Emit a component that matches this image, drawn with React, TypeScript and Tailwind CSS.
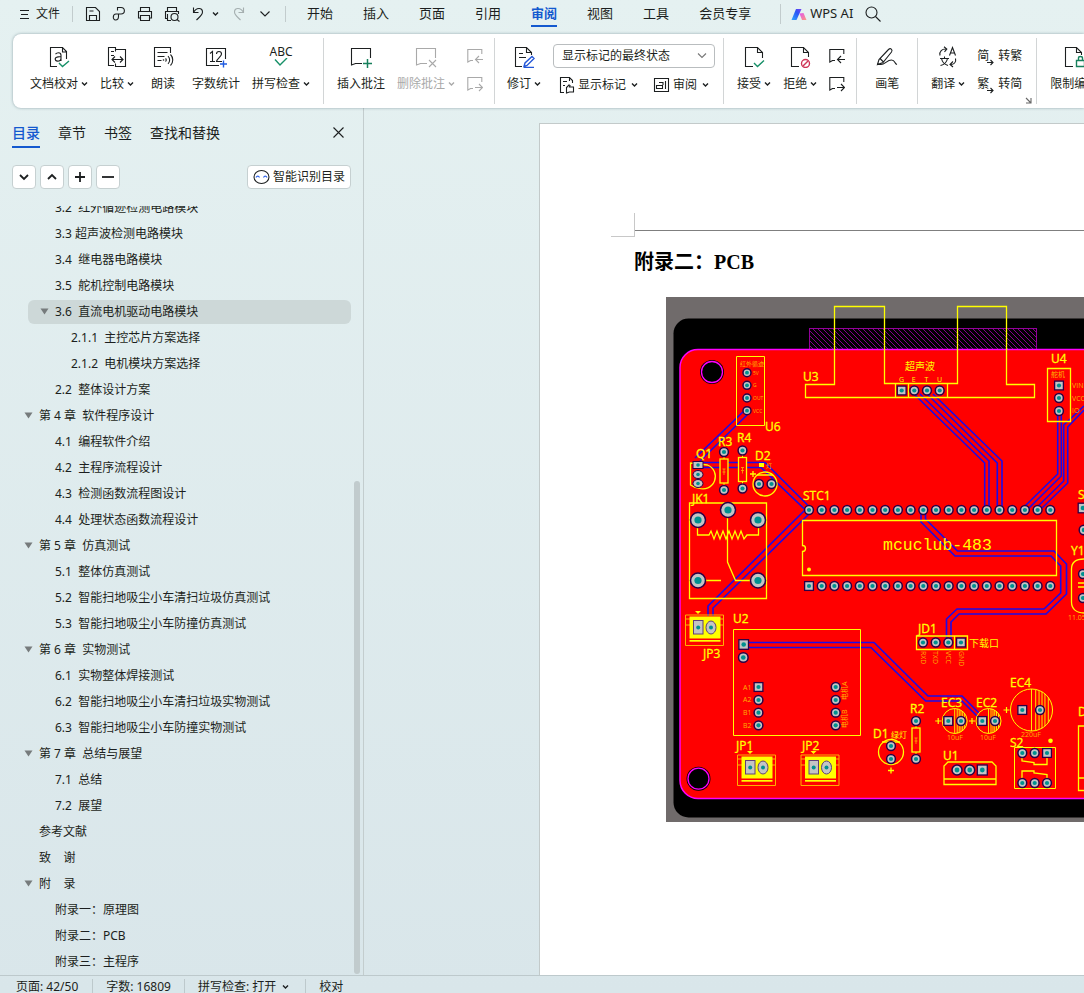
import { useState, type ReactNode } from "react";
import clsx from "clsx";

type OutlineItem = {
  level: number;
  text: string;
  expandable?: boolean;
};

const outline: OutlineItem[] = [
  { level: 1, text: "3.2  红外循迹检测电路模块" },
  { level: 1, text: "3.3 超声波检测电路模块" },
  { level: 1, text: "3.4  继电器电路模块" },
  { level: 1, text: "3.5  舵机控制电路模块" },
  { level: 1, text: "3.6  直流电机驱动电路模块", expandable: true },
  { level: 2, text: "2.1.1  主控芯片方案选择" },
  { level: 2, text: "2.1.2  电机模块方案选择" },
  { level: 1, text: "2.2  整体设计方案" },
  { level: 0, text: "第 4 章  软件程序设计", expandable: true },
  { level: 1, text: "4.1  编程软件介绍" },
  { level: 1, text: "4.2  主程序流程设计" },
  { level: 1, text: "4.3  检测函数流程图设计" },
  { level: 1, text: "4.4  处理状态函数流程设计" },
  { level: 0, text: "第 5 章  仿真测试", expandable: true },
  { level: 1, text: "5.1  整体仿真测试" },
  { level: 1, text: "5.2  智能扫地吸尘小车清扫垃圾仿真测试" },
  { level: 1, text: "5.3  智能扫地吸尘小车防撞仿真测试" },
  { level: 0, text: "第 6 章  实物测试", expandable: true },
  { level: 1, text: "6.1  实物整体焊接测试" },
  { level: 1, text: "6.2  智能扫地吸尘小车清扫垃圾实物测试" },
  { level: 1, text: "6.3  智能扫地吸尘小车防撞实物测试" },
  { level: 0, text: "第 7 章  总结与展望", expandable: true },
  { level: 1, text: "7.1  总结" },
  { level: 1, text: "7.2  展望" },
  { level: 0, text: "参考文献" },
  { level: 0, text: "致    谢" },
  { level: 0, text: "附    录", expandable: true },
  { level: 1, text: "附录一：原理图" },
  { level: 1, text: "附录二：PCB" },
  { level: 1, text: "附录三：主程序" },
];

const menuTabs = ["开始", "插入", "页面", "引用", "审阅", "视图", "工具", "会员专享"];
const sideTabs = ["目录", "章节", "书签", "查找和替换"];

/* ---------- icons ---------- */

const Icon = ({ w = 22, h = 22, children }: { w?: number; h?: number; children: ReactNode }) => (
  <svg
    width={w}
    height={h}
    viewBox={`0 0 ${w} ${h}`}
    fill="none"
    stroke="currentColor"
    strokeWidth="1.1"
    className="block shrink-0"
    aria-hidden="true"
  >
    {children}
  </svg>
);

const Chevron = () => (
  <Icon w={7} h={6}>
    <path d="M1 1.5 3.5 4 6 1.5" strokeWidth="1.4" />
  </Icon>
);

const ProofIcon = () => (
  <Icon>
    <path d="M9 20.500H2.500v-19h12l4 4V13M14.500 1.500v4.500h4" />
    <path d="M7.500 8.200c.8-1 1.800-1.400 3-1.400 1.700 0 2.500.9 2.500 2.500v5.600M13 10.500l-3 .4c-1.800.3-2.800.9-2.800 2.200s1 2 2.300 2c1.900 0 3.500-1.300 3.500-3.200" />
    <path d="m11 17 3.500 3.500L21 15" stroke="#179068" strokeWidth="1.400" />
  </Icon>
);

const CompareIcon = () => (
  <Icon>
    <path d="M8 19.500H2.500v-18h7v3M9.500 5.500v-2h10v17h-10v-3M5 5.500h3M5 9.500h3" />
    <path d="M6.500 13.500h10M9 10.500l-3 3 3 3M14 10.500l3 3-3 3" />
  </Icon>
);

const ReadIcon = () => (
  <Icon>
    <path d="M9 20.500H2.500v-19h16V7M5.500 6.500h10M5.500 10.500h7M5.500 14.500h4" />
    <path d="M13.500 12.500c1 .8 1 2.200 0 3M16 10.200c2.200 2 2.200 5.600 0 7.600M18.500 8.500c3 3 3 8 0 11" />
    <circle cx="11.500" cy="14" r=".8" fill="currentColor" stroke="none" />
  </Icon>
);

const CountIcon = () => (
  <Icon>
    <path d="M14 19.500H1.500v-17h19V13" />
    <path d="M5 7.500 7.500 5.500v10M5 15.500h5M11.500 8c0-1.500 1-2.500 2.500-2.500s2.500 1 2.500 2.500c0 2.500-4.500 4.500-5 7.500h5.500" />
    <path d="M18.500 14.500v7M15 18h7" stroke="#1f5be0" strokeWidth="1.400" />
  </Icon>
);

const SpellIcon = () => (
  <span className="flex h-[22px] flex-col items-center">
    <span className="text-xs leading-3">ABC</span>
    <Icon w={14} h={9}>
      <path d="m1 1.500 5 5.500L13 0" stroke="#179068" strokeWidth="1.400" />
    </Icon>
  </span>
);

const CommentIcon = ({ remove }: { remove?: boolean }) => (
  <Icon>
    <path d="M12 17.500H5.500l-4 1.500V2.500h19V12" />
    {remove ? (
      <path d="m14 14 7 7M21 14l-7 7" />
    ) : (
      <path d="M17.500 13v9M13 17.500h9" stroke="#17805c" strokeWidth="1.500" />
    )}
  </Icon>
);

const StepIcon = ({ next }: { next?: boolean }) => (
  <Icon w={16} h={16}>
    <path d="M6 12.500H3.500L.8 14V1.500h14V6" />
    {next ? <path d="M8 11.500h7.500M12 8l3.500 3.500L12 15" /> : <path d="M16 11.500H8.500M12 8l-3.500 3.500L12 15" />}
  </Icon>
);

const ReviseIcon = () => (
  <Icon>
    <path d="M9 20.500H2.500v-19h11l5 5V9M13.500 1.500v5h5M6 7.500h4M6 11.500h7" />
    <path d="m11 20.500 1-3.500 7-6.500 2 2-7 7zM11 21.500h10" stroke="#2457d8" strokeWidth="1.400" />
  </Icon>
);

const MarkIcon = () => (
  <Icon w={16} h={18}>
    <path d="M5 16.500H1.500v-15h9l3 3V7M10.500 1.500v3.500M4 5.500h4M4 9.500h2M7.500 16.500v-5l2.500-2.500 1 .5-.5 1.500h4v5h-4l-3 1z" />
  </Icon>
);

const PaneIcon = () => (
  <Icon w={17} h={16}>
    <path d="M1.500 1.500h14v13h-14zM12.500 4v8M3.500 8.500h6v3h-6zM6 5.500h4V8" />
  </Icon>
);

const AcceptIcon = () => (
  <Icon>
    <path d="M10 20.500H2.500v-19h12l5 5V12M14.500 1.500v5h5" />
    <path d="m11 17 3.500 3.500 6.500-6" stroke="#179068" strokeWidth="1.400" />
  </Icon>
);

const RejectIcon = () => (
  <Icon>
    <path d="M10 20.500H2.500v-19h12l5 5V11M14.500 1.500v5h5" />
    <circle cx="16.500" cy="17.500" r="4" stroke="#cf3557" strokeWidth="1.400" />
    <path d="m14 20 5-5" stroke="#cf3557" strokeWidth="1.400" />
  </Icon>
);

const PenIcon = () => (
  <Icon>
    <path d="m1.500 18.500 1.500-5 9.500-10c2-2 4.500 0 3 2.500L7 16.500zM4 12.500l3.500 3.500M1.500 18.500H5c4 0 6-4.500 10.500-4.500 4 0 2.500 3.500 5.500 4.500" />
  </Icon>
);

const TranslateIcon = () => (
  <Icon>
    <path d="M3 9.500C2 5.500 5 2.500 9.500 3M7 .8 9.800 3 7.500 5.800M18.500 12.500c1 3.500-1.500 6.500-5.500 6M16 15.500 13 18.500l3 2.500" />
    <path d="m12.500 9.500 3-8 3 8M13.500 7h4M3 12.500h9M7.500 10.500v2M4.500 12.500c.8 4 3 6 6.500 7M10.500 12.500c-.8 4-3 6-7 7" />
  </Icon>
);

const LimitIcon = () => (
  <Icon>
    <path d="M10 20.500H2.500v-19h11l5 5V9M13.500 1.500v5h5" />
    <path d="M13.500 14.500h8v6h-8zM15.500 14.500V12c0-2 4-2 4 0v2.500" stroke="#17805c" strokeWidth="1.400" />
  </Icon>
);

const SaveIcon = () => (
  <Icon w={16} h={16}>
    <path d="M1.500 1.500h9l4 4v9h-13zM4.500 14V9.500h7V14M4.500 5h4" />
  </Icon>
);

const PdfIcon = () => (
  <Icon w={14} h={16}>
    <path d="M5.500 4.500v-3H9c4.500 0 4.500 6.500 0 6.500H4c-3.500 0-3.500 6-.5 6 2.500 0 3-1.500 3-3.500V8" />
  </Icon>
);

const PrintIcon = () => (
  <Icon w={16} h={16}>
    <path d="M3.500 5V1.500h9V5M3.500 12H1.500V5.500h13V12h-2M3.500 9.500h9v5h-9z" />
  </Icon>
);

const PreviewIcon = () => (
  <Icon w={16} h={16}>
    <path d="M3.500 5V1.500h9V5M3.500 12.500h-2v-7h13V8M3.500 8v6.500H7" />
    <circle cx="10.500" cy="11" r="3.500" />
    <path d="m13 13.500 2.500 2" />
  </Icon>
);

const UndoIcon = () => (
  <Icon w={12} h={16}>
    <path d="M1.500 1.500v5h5M1.500 6.500C4 1.500 10.500 1 10.500 6c0 3-3 5-6 8" />
  </Icon>
);

const RedoIcon = () => (
  <Icon w={12} h={16}>
    <path d="M10.500 1.500v5h-5M10.500 6.500C8 1.500 1.500 1 1.500 6c0 3 3 5 6 8" />
  </Icon>
);

const WpsAiLogo = () => (
  <svg width="16" height="13" viewBox="0 0 16 13" aria-hidden="true">
    <defs>
      <linearGradient id="aiA" x1="0" y1="1" x2="1" y2="0">
        <stop offset="0" stopColor="#2fa8ff" />
        <stop offset=".6" stopColor="#2b56f5" />
        <stop offset="1" stopColor="#7a3df0" />
      </linearGradient>
      <linearGradient id="aiB" x1="0" y1="0" x2="1" y2="1">
        <stop offset="0" stopColor="#e054f0" />
        <stop offset="1" stopColor="#ff9a7a" />
      </linearGradient>
    </defs>
    <path d="M5 1h5.500L5.500 12H.5z" fill="url(#aiA)" />
    <path d="M8.500 5.500 12.500 5l3 7H11z" fill="url(#aiB)" />
  </svg>
);

/* ---------- ribbon ---------- */

const Group = ({ children, className }: { children: ReactNode; className: string }) => (
  <div className={clsx("my-1 flex shrink-0 items-start gap-3 border-r border-[#d2d5d6] pt-2", className)}>
    {children}
  </div>
);

const BigButton = ({
  icon,
  label,
  arrow,
  disabled,
}: {
  icon: ReactNode;
  label: string;
  arrow?: boolean;
  disabled?: boolean;
}) => (
  <button
    disabled={disabled}
    className="flex min-w-[34px] shrink-0 flex-col items-center gap-2 leading-4 disabled:text-[#a9a9a9]"
  >
    {icon}
    <span className="flex items-center gap-[3px] whitespace-nowrap">
      {label}
      {arrow && <Chevron />}
    </span>
  </button>
);

const StepButtons = ({ disabled }: { disabled?: boolean }) => (
  <div className="flex w-[15px] flex-col gap-3 pt-0.5">
    <button aria-label="上一条" disabled={disabled} className="disabled:text-[#a9a9a9]">
      <StepIcon />
    </button>
    <button aria-label="下一条" disabled={disabled} className="disabled:text-[#a9a9a9]">
      <StepIcon next />
    </button>
  </div>
);

const ConvertButton = ({ mark, label }: { mark: string; label: string }) => (
  <button className="flex items-center gap-1 leading-4 whitespace-nowrap">
    <span className="relative w-[17px] text-left">
      {mark}
      <span className="absolute right-0 -bottom-0.5">
        <Icon w={7} h={7}>
          <path d="M0 3.500h6M3.500 1 6 3.500 3.500 6" />
        </Icon>
      </span>
    </span>
    {label}
  </button>
);

const Ribbon = () => (
  <div className="relative z-10 ml-[13px] flex h-[74px] shrink-0 overflow-hidden rounded-l-lg bg-white text-xs shadow-[0_0_3px_rgba(60,90,100,0.5)]">
    <Group className="pr-[13px] pl-[17px]">
      <BigButton icon={<ProofIcon />} label="文档校对" arrow />
      <BigButton icon={<CompareIcon />} label="比较" arrow />
      <BigButton icon={<ReadIcon />} label="朗读" />
      <BigButton icon={<CountIcon />} label="字数统计" />
      <BigButton icon={<SpellIcon />} label="拼写检查" arrow />
    </Group>
    <Group className="pr-3 pl-[13px]">
      <BigButton icon={<CommentIcon />} label="插入批注" />
      <BigButton icon={<CommentIcon remove />} label="删除批注" arrow disabled />
      <StepButtons disabled />
    </Group>
    <Group className="pr-2 pl-3">
      <BigButton icon={<ReviseIcon />} label="修订" arrow />
      <div className="-mt-0.5 flex flex-col gap-2">
        <div className="relative">
          <select
            aria-label="标记状态"
            className="block h-6 w-[162px] appearance-none rounded border border-[#b9bdbf] bg-white pl-2 leading-4"
          >
            <option>显示标记的最终状态</option>
          </select>
          <span className="pointer-events-none absolute top-2 right-2">
            <Icon w={10} h={8}>
              <path d="m1 1.500 4 4 4-4" stroke="#777" />
            </Icon>
          </span>
        </div>
        <div className="flex justify-between px-1.5">
          <button className="flex items-center gap-[3px] leading-4">
            <MarkIcon />
            <span className="pr-0.5">显示标记</span>
            <Chevron />
          </button>
          <button className="flex items-center gap-[3px] leading-4">
            <PaneIcon />
            <span className="pr-0.5">审阅</span>
            <Chevron />
          </button>
        </div>
      </div>
    </Group>
    <Group className="pr-3 pl-[13px]">
      <BigButton icon={<AcceptIcon />} label="接受" arrow />
      <BigButton icon={<RejectIcon />} label="拒绝" arrow />
      <StepButtons />
    </Group>
    <Group className="px-[13px]">
      <BigButton icon={<PenIcon />} label="画笔" />
    </Group>
    <Group className="relative pr-3.5 pl-[13px]">
      <BigButton icon={<TranslateIcon />} label="翻译" arrow />
      <div className="flex flex-col gap-3 pt-0.5">
        <ConvertButton mark="简" label="转繁" />
        <ConvertButton mark="繁" label="转简" />
      </div>
      <span className="absolute right-1 bottom-0">
        <Icon w={7} h={7}>
          <path d="m1 1 5 5M6 1v5H1" stroke="#666" />
        </Icon>
      </span>
    </Group>
    <Group className="px-[13px]">
      <BigButton icon={<LimitIcon />} label="限制编辑" />
    </Group>
  </div>
);

const TopBar = () => {
  const [tab, setTab] = useState("审阅");
  return (
    <header className="flex h-[34px] shrink-0 items-center overflow-hidden pb-1.5 pl-5 whitespace-nowrap">
      <button className="flex items-center gap-[7px] text-xs">
        <Icon w={9} h={11}>
          <path d="M0 1.500h9M1 5.500h7M0 9.500h9" />
        </Icon>
        文件
      </button>
      <span className="ml-3 h-4 w-px shrink-0 bg-[#c2cccd]" />
      <div className="ml-3 flex shrink-0 items-center gap-[11px]">
        <button aria-label="保存"><SaveIcon /></button>
        <button aria-label="输出为PDF"><PdfIcon /></button>
        <button aria-label="打印"><PrintIcon /></button>
        <button aria-label="打印预览"><PreviewIcon /></button>
      </div>
      <button aria-label="撤销" className="ml-3"><UndoIcon /></button>
      <button aria-label="撤销历史" className="ml-2"><Chevron /></button>
      <button aria-label="恢复" className="ml-3.5 text-[#a5afb0]"><RedoIcon /></button>
      <button aria-label="更多" className="ml-3.5">
        <Icon w={12} h={8}>
          <path d="m1.500 1.500 4.500 4.500 4.500-4.500" />
        </Icon>
      </button>
      <span className="ml-3.5 h-4 w-px shrink-0 bg-[#c2cccd]" />
      <nav className="ml-[21px] flex gap-[30px] text-[13px]">
        {menuTabs.map((name) => (
          <button
            key={name}
            onClick={() => setTab(name)}
            className={clsx(
              "shrink-0 border-b-2 pt-0.5 pb-0.5 leading-5",
              tab === name ? "border-[#1459cf] font-bold text-[#1459cf]" : "border-transparent"
            )}
          >
            {name}
          </button>
        ))}
      </nav>
      <span className="ml-[29px] h-5 w-px shrink-0 bg-[#c2cccd]" />
      <button className="ml-2.5 flex items-center gap-[3px] text-[13px]">
        <WpsAiLogo />
        WPS AI
      </button>
      <button aria-label="搜索" className="ml-3">
        <Icon w={16} h={16}>
          <circle cx="6.500" cy="6.500" r="5.500" />
          <path d="m10.500 10.500 5 5" />
        </Icon>
      </button>
    </header>
  );
};

/* ---------- outline panel ---------- */

const ToolButton = ({ label, d }: { label: string; d: string }) => (
  <button
    aria-label={label}
    className="flex size-6 items-center justify-center rounded border border-[#c6d0d1] bg-white"
  >
    <Icon w={12} h={12}>
      <path d={d} strokeWidth="1.800" />
    </Icon>
  </button>
);

const indent = ["pl-[39px]", "pl-[55px]", "pl-[71px]"];

const OutlinePanel = () => {
  const [tab, setTab] = useState("目录");
  const [selected, setSelected] = useState(4);

  return (
    <aside className="flex w-[364px] shrink-0 flex-col border-r border-[#c3cdce]">
      <div className="flex items-start justify-between pt-3.5 pr-[18px] pl-3">
        <div className="flex gap-[18px] text-sm">
          {sideTabs.map((name) => (
            <button
              key={name}
              onClick={() => setTab(name)}
              className={clsx(
                "border-b-2 pb-[3px] leading-[21px]",
                tab === name ? "border-[#1459cf] font-medium text-[#1459cf]" : "border-transparent"
              )}
            >
              {name}
            </button>
          ))}
        </div>
        <button aria-label="关闭" className="pt-1">
          <Icon w={13} h={13}>
            <path d="m1.500 1.500 10 10M11.500 1.500l-10 10" />
          </Icon>
        </button>
      </div>
      <div className="mt-[17px] flex items-center justify-between pr-3 pl-3">
        <div className="flex gap-1">
          <ToolButton label="展开" d="m2 4 4 4 4-4" />
          <ToolButton label="收起" d="m2 8 4-4 4 4" />
          <ToolButton label="提升级别" d="M1 6h10M6 1v10" />
          <ToolButton label="降低级别" d="M0 6h12" />
        </div>
        <button className="flex h-6 items-center gap-[3px] rounded border border-[#c6d0d1] bg-white px-[5px] text-xs">
          <Icon w={17} h={16}>
            <ellipse cx="8.500" cy="8" rx="7.500" ry="6.500" />
            <path d="M3 8.500c.8-1.800 2.700-1.800 3.500 0M10.500 8.500c.8-1.800 2.700-1.800 3.500 0" stroke="#2f62e8" />
          </Icon>
          智能识别目录
        </button>
      </div>
      <div className="relative mt-[17px] min-h-0 flex-1 overflow-hidden">
        <ul className="-mt-[11px] text-xs">
          {outline.map((item, i) => (
            <li key={item.text} className="flex h-[26px] items-center pr-3">
              <button
                onClick={() => setSelected(i)}
                className={clsx("relative flex h-6 flex-1 items-center whitespace-pre", indent[item.level])}
              >
                {selected === i && <span className="absolute inset-y-0 right-0 left-7 rounded-md bg-[#cdd8d8]" />}
                <span className="relative">
                  {item.expandable && (
                    <svg width="9" height="7" className="absolute top-1 -left-[15px]" aria-hidden="true">
                      <path d="M.5.500h8L4.500 6.500z" fill="#767b7c" />
                    </svg>
                  )}
                  {item.text}
                </span>
              </button>
            </li>
          ))}
        </ul>
        <span className="absolute right-[3px] bottom-px h-[493px] w-1.5 rounded-full bg-[#c1cbcd]" />
      </div>
    </aside>
  );
};

/* ---------- circuit board ---------- */

const Y = "#ffff00";

const Pad = ({ x, y, square, r = 4.4 }: { x: number; y: number; square?: boolean; r?: number }) => (
  <g>
    {square ? (
      <rect x={x - r} y={y - r} width={r * 2} height={r * 2} fill="#c4c4c4" stroke="#2a0045" strokeWidth="1.300" />
    ) : (
      <circle cx={x} cy={y} r={r} fill="#c4c4c4" stroke="#2a0045" strokeWidth="1.500" />
    )}
    <circle cx={x} cy={y} r={r * 0.48} fill="#009090" />
  </g>
);

const Label = ({ x, y, s = 12, children }: { x: number; y: number; s?: number; children: string }) => (
  <text x={x} y={y} fontSize={s} fill={Y} stroke={Y} strokeWidth={s > 10 ? 0.3 : 0}>
    {children}
  </text>
);

const Terminal = ({ x, y }: { x: number; y: number }) => (
  <g transform={`translate(${x} ${y})`}>
    <path d="M0 0h38v30.500H0zM0 4h38M0 10h38M4 26.500h31" stroke="#ffb000" fill="none" />
    <path d="M4 1.500h31v22H4z" fill={Y} />
    <path d="M4 25.500h31" stroke={Y} />
    <path d="M9.500-4h6l-3 3z" fill={Y} />
    <rect x="8" y="5.500" width="9.500" height="13.500" fill="#c4c4c4" stroke="#60407a" />
    <ellipse cx="25.500" cy="12.500" rx="5" ry="6.500" fill="#c4c4c4" stroke="#60407a" />
    <circle cx="12.700" cy="12.500" r="2" fill="#009090" />
    <circle cx="25.500" cy="12.500" r="2" fill="#009090" />
  </g>
);

const Capacitor = ({ x, y, r, a, b }: { x: number; y: number; r: number; a: number; b: number }) => (
  <g>
    <circle cx={x} cy={y} r={r} stroke={Y} fill="none" />
    {[0, 0.2, 0.36, 0.5, 0.64, 0.8].map((k) => {
      const half = r * Math.sqrt(1 - k * k);
      return <path key={k} d={`M${x + r * k} ${y - half}v${half * 2}`} stroke={Y} strokeWidth=".9" />;
    })}
    <path d={`M${x - r - 7} ${y}h6m-3-3v6`} stroke={Y} strokeWidth="1.200" />
    <Pad x={a} y={y} square />
    <Pad x={b} y={y} />
  </g>
);

const Resistor = ({ x, top, bottom }: { x: number; top: number; bottom: number }) => (
  <g>
    <path d={`M${x} ${top}V${bottom}`} stroke={Y} />
    <rect x={x - 4} y={top + 7} width="8" height={bottom - top - 14} fill="#f00" stroke={Y} strokeWidth="1.300" />
    <path d={`M${x - 1.5} ${top + 17}h3m-3 3h3m-1.500-3v6`} stroke="#ffb000" strokeWidth=".8" />
    <Pad x={x} y={top} />
    <Pad x={x} y={bottom} />
  </g>
);

const pins = Array.from({ length: 20 }, (_, i) => 143 + i * 12.7);

const Board = () => (
  <svg
    width="418"
    height="525"
    viewBox="0 0 418 525"
    role="img"
    aria-label="PCB"
    className="block shrink-0 [font-family:'Open_Sans','Noto_Sans_CJK_SC',sans-serif]"
  >
    <defs>
      <pattern id="hatch" width="5" height="5" patternUnits="userSpaceOnUse">
        <path d="M-1-1 6 6M-1 4l2 2M4-1l2 2" stroke="#93009b" strokeWidth=".9" />
      </pattern>
    </defs>
    <rect width="418" height="525" fill="#706b6b" />
    <rect x="7.500" y="21.500" width="440" height="499" rx="15" fill="#000" />
    <rect x="143.500" y="31.500" width="227" height="21" fill="url(#hatch)" stroke="#93009b" />
    <rect x="14" y="52.500" width="430" height="449" rx="18" fill="#f00" stroke="#ff00ff" strokeWidth="1.500" />
    {[[46, 75], [32.5, 481.7]].map(([x, y]) => (
      <g key={y}>
        <circle cx={x} cy={y} r="12" />
        <circle cx={x} cy={y} r="10.500" stroke="#ff00ff" strokeWidth="1.300" />
      </g>
    ))}

    {/* copper traces */}
    <g stroke="#1a0bea" strokeWidth="1.600" fill="none">
      <path d="M78 114 29 161M81 118 34 164M32 165.500h67l44 44M32 170.500h63l45 43" />
      <path d="M139 213 42 309v10M143 217 47 311v8" />
      <path d="M248 97l70.700 69v45M254 97l69 67v47M261 97l70.300 69v45M267 97l69 67v47" />
      <path d="M391.700 117v60L358 210M395.300 117v62L363 211M418 109l-20.300 19v56L370 211M418 113l-16.300 17v56L376 211" />
      <path d="M255 217v8l34 34h96l9.700 10v27L378 312h-87l-10.500 10v22" />
      <path d="M259.500 217v5l32 32H388l12.500 13v30L380 317h-87l-8 8v19" />
      <path d="M82 345.500h126l54 53.500h34l17 17M82 350.500h123l54.700 53.500H296l15 15" />
    </g>

    {/* silkscreen */}
    <g stroke={Y} strokeWidth="1.300" fill="none">
      <path d="M139.500 100.500v-13h29v-78h50v77h73v-77h49v78h28v13z" />
      <path d="M229.500 87v13M242.500 87v13M281.500 87v13" />
      <path d="M70.500 59.500h28v69h-28z" strokeWidth="1" />
      <path d="M381.500 71.500h23v53h-23z" />
      <path d="M136.500 223.500h254v55h-254v-24a3 3 0 0 0 0-6z" />
      <path d="M23.500 206h77v95.500h-77z" />
      <path d="M31.500 223v15H43l2-4 3 8 3-8 3 8 3-8 3 8 3-8 3 8 3-8 3 8 3-8 3 8 3-4h11.500v-15M61.500 213v52l8 18.500H92M36 283.500h19" />
      <path d="M24.500 166v22c3 2 6 3 8 3a12 12 0 0 0 9-23z" />
      <circle cx="99" cy="187" r="12" />
      <path d="M91 178h16M84 177h6M87 174v6" />
      <path d="M67.500 332.500h127v106h-127z" strokeWidth="1" />
      <path d="M250.500 339h51v13.500h-51zM288.500 339v13.500" />
      <path d="m278 469 4-4h44l4 4v18.500h-52zM278 482h52" />
      <path d="M348.500 450.500h41v41h-41z" strokeWidth="1" />
      <path d="M356 456v8l12 1.500v2h13V456M356 486v-12h12v2l13 1.500V486" />
      <path d="M418 262c-8 0-12.500 3-12.500 10v33c0 7 5 11 12.500 11M412 286h6M412 290h6M418 429h-5.500v64.500h5.500M413 481h5" />
      <circle cx="225" cy="455" r="12.500" />
      <path d="M216 445h18M222 473.500h6M225 470.500v6" />
    </g>
    <path d="M93 166h5v4h-5z" fill={Y} />
    <circle cx="143" cy="272.500" r="2" fill={Y} />
    <circle cx="384.500" cy="443.700" r="2.300" fill={Y} />

    <Resistor x={58} top={155} bottom={193} />
    <Resistor x={76.5} top={153.500} bottom={191.500} />
    <Resistor x={250} top={424} bottom={462} />
    <Capacitor x={288.7} y={424} r={12.5} a={282.3} b={295} />
    <Capacitor x={322.5} y={424} r={12.5} a={316.3} b={329} />
    <Capacitor x={365.5} y={413} r={21} a={356.3} b={374} />
    <Terminal x={19.5} y={318} />
    <Terminal x={71.5} y={458} />
    <Terminal x={135} y={458} />

    {/* pads */}
    {pins.map((x, i) => (
      <g key={x}>
        <Pad x={x} y={213} />
        <Pad x={x} y={289} square={i === 0} />
      </g>
    ))}
    {[235.7, 248.3, 261, 273.7].map((x, i) => <Pad key={x} x={x} y={93.500} square={i === 0} />)}
    {[257, 269.7, 282.3, 295].map((x, i) => <Pad key={x} x={x} y={345.500} square={i === 3} />)}
    {[75.7, 88.3, 101, 113.7].map((y) => <Pad key={y} x={81} y={y} r={4} />)}
    {[88.5, 101, 114].map((y, i) => <Pad key={y} x={393} y={y} square={i === 0} />)}
    {[390, 403, 415.7, 428.3].map((y, i) => (
      <g key={y}>
        <Pad x={92.500} y={y} square={i === 0} />
        <Pad x={169.700} y={y} />
      </g>
    ))}
    {[356.3, 368.7, 381].map((x, i) => (
      <g key={x}>
        <Pad x={x} y={456} square={i === 2} />
        <Pad x={x} y={486} />
      </g>
    ))}
    {[291, 303.7, 316.3].map((x, i) => <Pad key={x} x={x} y={473} square={i === 2} r={5} />)}
    {[[62, 213], [32, 223], [92, 223], [32, 283.5], [92, 283.5]].map(([x, y]) => (
      <Pad key={`${x}-${y}`} x={x} y={y} r={7.5} />
    ))}
    <rect x="27" y="164.500" width="10" height="7" fill="#c4c4c4" stroke="#2a0045" />
    <ellipse cx="32" cy="177.500" rx="5" ry="4" fill="#c4c4c4" stroke="#2a0045" />
    <ellipse cx="32" cy="186.500" rx="5" ry="4" fill="#c4c4c4" stroke="#2a0045" />
    {[168, 177.5, 186.5].map((y) => <circle key={y} cx="32" cy={y} r="1.800" fill="#009090" />)}
    <Pad x={93} y={187} />
    <Pad x={105.5} y={187} />
    <Pad x={77.7} y={347.5} square r={4.8} />
    <Pad x={77.3} y={360.5} r={4.8} />
    <Pad x={225} y={449} />
    <Pad x={225} y={462} />
    <Pad x={417} y={211} square r={4.8} />
    <Pad x={418} y={233} r={4.8} />
    <Pad x={417} y={277} />
    <Pad x={417} y={301} />

    {/* designators */}
    <Label x={137} y={84}>U3</Label>
    <Label x={99} y={134}>U6</Label>
    <Label x={385} y={66}>U4</Label>
    <Label x={52} y={149}>R3</Label>
    <Label x={71} y={145}>R4</Label>
    <Label x={30} y={161}>Q1</Label>
    <Label x={89} y={163}>D2</Label>
    <Label x={26} y={206}>JK1</Label>
    <Label x={137} y={203}>STC1</Label>
    <Label x={37} y={361}>JP3</Label>
    <Label x={67} y={326}>U2</Label>
    <Label x={70} y={453}>JP1</Label>
    <Label x={136} y={453}>JP2</Label>
    <Label x={252} y={336}>JD1</Label>
    <Label x={275} y={410}>EC3</Label>
    <Label x={310} y={410}>EC2</Label>
    <Label x={344} y={390}>EC4</Label>
    <Label x={244} y={416}>R2</Label>
    <Label x={207} y={441}>D1</Label>
    <Label x={277} y={463}>U1</Label>
    <Label x={344} y={450}>S2</Label>
    <Label x={412} y={202}>S</Label>
    <Label x={405} y={258}>Y1</Label>
    <Label x={412} y={419}>D</Label>
    <text x="217" y="253" fontSize="16.500" fill={Y} className="[font-family:'Liberation_Mono',monospace]">
      mcuclub-483
    </text>
    <Label x={239} y={73} s={10}>超声波</Label>
    <Label x={303} y={350} s={10}>下载口</Label>
    <Label x={225} y={441} s={8}>绿灯</Label>
    {["G", "E", "T", "U"].map((c, i) => (
      <Label key={c} x={233 + i * 12.7} y={85} s={7}>{c}</Label>
    ))}
    <g fill="#ffb000" fontSize="7">
      <text x="385" y="80">舵机</text>
      <text x="74" y="69" fontSize="6">红外循迹</text>
      {["5V", "G", "OUT", "VCC"].map((t, i) => (
        <text key={t} x="87" y={77.5 + i * 12.7} fontSize="5">{t}</text>
      ))}
      {["VIN", "VCC", "IO"].map((t, i) => (
        <text key={t} x="406" y={91 + i * 12.7}>{t}</text>
      ))}
      {["A1", "A2", "B1", "B2"].map((t, i) => (
        <text key={t} x="77" y={392.5 + i * 12.8}>{t}</text>
      ))}
      {["RXD", "TXD", "VCC", "GND"].map((t, i) => (
        <text key={t} transform={`translate(${254.5 + i * 12.7} 354) rotate(90)`}>{t}</text>
      ))}
      <text transform="translate(181 403) rotate(-90)">电机A</text>
      <text transform="translate(181 431) rotate(-90)">电机B</text>
      <text x="100" y="171" fontSize="6">灯</text>
      <text x="281" y="443">10uF</text>
      <text x="314" y="443">10uF</text>
      <text x="355" y="440">220uF</text>
      <text x="402" y="323">11.0592</text>
    </g>
  </svg>
);

const Page = () => (
  <main className="flex min-w-0 flex-1 overflow-hidden pt-[15px] pl-[175px]">
    <article className="min-w-0 flex-1 overflow-hidden border-t border-l border-[#c3caca] bg-white">
      <div className="mt-[89px] ml-[71px] flex">
        <span className="h-6 w-6 shrink-0 border-r border-b border-[#c8c8c8]" />
        <span className="mt-[17px] h-px flex-1 bg-[#7f7f7f]" />
      </div>
      <h1 className="mt-[11px] ml-[94px] text-xl leading-7 font-bold text-black [font-family:'Liberation_Serif','Noto_Sans_CJK_SC',serif]">
        附录二：PCB
      </h1>
      <div className="mt-[21px] ml-[126px]">
        <Board />
      </div>
    </article>
  </main>
);

const StatusBar = () => (
  <footer className="flex h-[18px] shrink-0 items-start overflow-hidden border-t border-[#bdc9cc] pt-[3px] pl-4 text-xs leading-4 whitespace-nowrap">
    <span className="border-r border-[#bdc9cc] pr-3.5">页面: 42/50</span>
    <span className="border-r border-[#bdc9cc] px-[13px]">字数: 16809</span>
    <button className="flex items-center gap-1.5 border-r border-[#bdc9cc] pr-4 pl-[13px]">
      拼写检查: 打开
      <Chevron />
    </button>
    <span className="pl-[13px]">校对</span>
  </footer>
);

const App = () => {
  return (
    <div className="flex h-screen flex-col overflow-hidden bg-gradient-to-b from-[#e5f1f1] to-[#d9e6ea] text-[#1c1f20] [font-family:'Noto_Sans','Noto_Sans_CJK_SC',sans-serif]">
      <TopBar />
      <Ribbon />
      <div className="flex min-h-0 flex-1">
        <OutlinePanel />
        <Page />
      </div>
      <StatusBar />
    </div>
  );
};

export default App;
